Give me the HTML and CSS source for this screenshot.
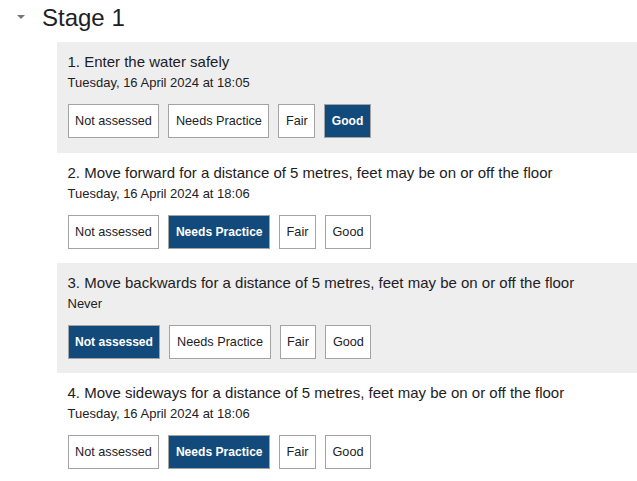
FILE: index.html
```html
<!DOCTYPE html>
<html lang="en">
<head>
<meta charset="utf-8">
<title>Stage 1</title>
<link rel="stylesheet" href="styles.css">
</head>
<body>
<section class="stage">
  <div class="stage-head">
    <span class="caret" aria-hidden="true"></span>
    <h2 class="stage-title">Stage 1</h2>
  </div>
  <div class="items">
    <div class="item shaded">
      <div class="item-title">1. Enter the water safely</div>
      <div class="item-date">Tuesday, 16 April 2024 at 18:05</div>
      <div class="choices">
        <span class="choice">Not assessed</span>
        <span class="choice">Needs Practice</span>
        <span class="choice">Fair</span>
        <span class="choice active">Good</span>
      </div>
    </div>
    <div class="item">
      <div class="item-title">2. Move forward for a distance of 5 metres, feet may be on or off the floor</div>
      <div class="item-date">Tuesday, 16 April 2024 at 18:06</div>
      <div class="choices">
        <span class="choice">Not assessed</span>
        <span class="choice active">Needs Practice</span>
        <span class="choice">Fair</span>
        <span class="choice">Good</span>
      </div>
    </div>
    <div class="item shaded">
      <div class="item-title">3. Move backwards for a distance of 5 metres, feet may be on or off the floor</div>
      <div class="item-date">Never</div>
      <div class="choices">
        <span class="choice active">Not assessed</span>
        <span class="choice">Needs Practice</span>
        <span class="choice">Fair</span>
        <span class="choice">Good</span>
      </div>
    </div>
    <div class="item">
      <div class="item-title">4. Move sideways for a distance of 5 metres, feet may be on or off the floor</div>
      <div class="item-date">Tuesday, 16 April 2024 at 18:06</div>
      <div class="choices">
        <span class="choice">Not assessed</span>
        <span class="choice active">Needs Practice</span>
        <span class="choice">Fair</span>
        <span class="choice">Good</span>
      </div>
    </div>
  </div>
</section>
</body>
</html>
```
FILE: styles.css
```css
html, body {
  margin: 0;
  padding: 0;
  background: #ffffff;
}
body {
  font-family: "Liberation Sans", Arial, sans-serif;
  color: #1d2125;
  overflow: hidden;
}
.stage {
  padding-top: 3px;
}
.stage-head {
  display: flex;
  align-items: center;
  height: 30px;
  padding-left: 17px;
}
.caret {
  width: 0;
  height: 0;
  border-left: 4.5px solid transparent;
  border-right: 4.5px solid transparent;
  border-top: 4.5px solid #73787d;
  margin-top: -2px;
}
.stage-title {
  margin: 0 0 0 17px;
  font-size: 24px;
  font-weight: 400;
  line-height: 30px;
}
.items {
  margin-left: 57px;
  margin-top: 9px;
}
.item {
  padding: 10px 11px 14px 10.5px;
  height: 86px;
}
.item.shaded {
  background: #eeeeee;
  height: 86.5px;
}
.item-title {
  font-size: 15px;
  line-height: 20px;
  white-space: nowrap;
}
.item-date {
  font-size: 13px;
  line-height: 18px;
  margin-top: 2px;
}
.choices {
  display: flex;
  gap: 9px;
  margin-top: 12px;
}
.choice {
  display: block;
  box-sizing: border-box;
  height: 34px;
  line-height: 32px;
  padding: 0 6.5px;
  font-size: 12.7px;
  border: 1px solid #a3a3a3;
  background: #ffffff;
  color: #1d2125;
  white-space: nowrap;
}
.choice.active {
  background: #134a7c;
  color: #ffffff;
  font-weight: 700;
  font-size: 12.1px;
}
```
